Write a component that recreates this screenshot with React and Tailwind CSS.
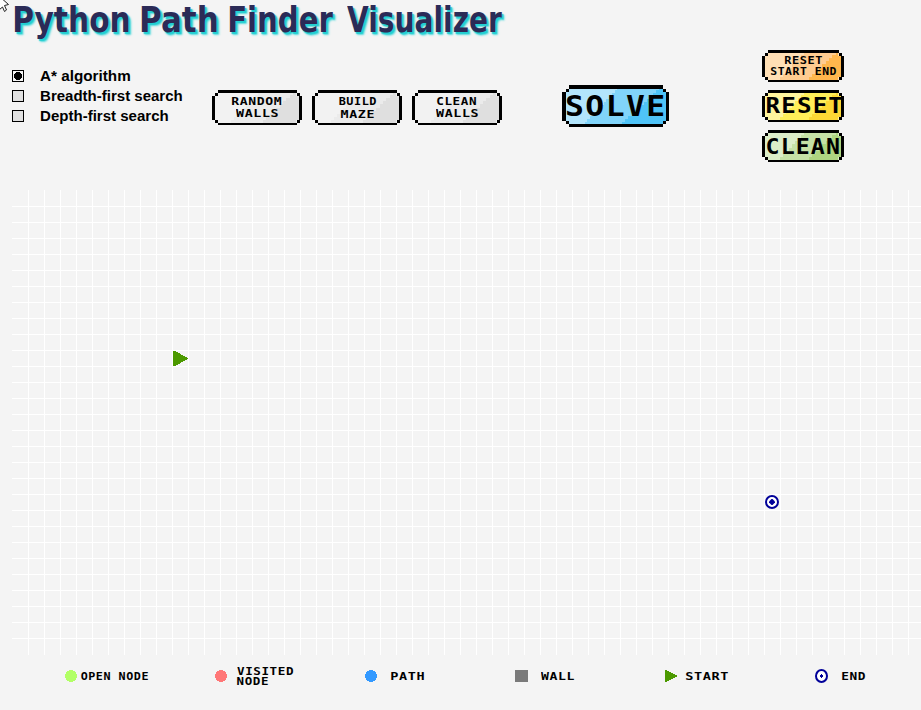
import { useLayoutEffect, useRef, useState } from "react";

// Stretches a piece of text so its capitals fill the box given by the class names.
function FitText({ children, className = "", font = "font-['DejaVu_Sans_Mono',monospace] tracking-[1.5px]" }) {
  const box = useRef(null);
  const label = useRef(null);
  const [transform, setTransform] = useState("none");

  useLayoutEffect(() => {
    const style = getComputedStyle(label.current);
    const rect = box.current.getBoundingClientRect();
    const line = parseFloat(style.lineHeight);
    const tracking = parseFloat(style.letterSpacing) || 0;
    const ctx = document.createElement("canvas").getContext("2d");
    ctx.font = `${style.fontWeight} ${style.fontSize} ${style.fontFamily}`;
    const ink = ctx.measureText(children);
    const cap = ctx.measureText("H").actualBoundingBoxAscent;
    const inkWidth =
      ink.actualBoundingBoxRight + ink.actualBoundingBoxLeft + tracking * (children.length - 1);
    const sx = rect.width / inkWidth;
    const sy = rect.height / cap;
    const baseline = (line + ink.fontBoundingBoxAscent - ink.fontBoundingBoxDescent) / 2;
    setTransform(
      `translate(${ink.actualBoundingBoxLeft * sx}px, ${-(baseline - cap) * sy}px) scale(${sx}, ${sy})`
    );
  }, [children]);

  return (
    <div ref={box} className={`shrink-0 ${className}`}>
      <span
        ref={label}
        className={`block w-max origin-top-left text-[32px] leading-[24px] font-bold whitespace-pre ${font}`}
        style={{ transform }}
      >
        {children}
      </span>
    </div>
  );
}

const TONES = {
  gray: ["#f2f2f2", "#ebebeb", "#dfdfdf"],
  blue: ["#b3e5fc", "#81d4fa", "#4fc3f7"],
  orange: ["#ffdfb5", "#ffcc90", "#ffb74d"],
  yellow: ["#fff59d", "#ffee58", "#fdd835"],
  green: ["#dcedc8", "#c5e1a5", "#aed581"],
};

// Region right of a stepped diagonal, ending at the inner side of the right border.
function steps(w, h, bottom, top) {
  const right = w - 3;
  const rows = Math.round((h - 4) / 3);
  const dy = (h - 4) / rows;
  let d = `M${w - 6} ${h - 2}`;
  for (let i = 0; i < rows; i++) {
    const x = Math.min(right, Math.round(w * (bottom + ((top - bottom) * (i + 0.5)) / rows)));
    d += `L${x} ${h - 2 - i * dy}L${x} ${h - 2 - (i + 1) * dy}`;
  }
  return d + `L${w - 6} 2L${w - 6} 6L${right} 6L${right} ${h - 5}L${w - 6} ${h - 5}Z`;
}

function PixelButton({ w, h, tone, unit = 3, className = "", children }) {
  const [light, mid, dark] = TONES[tone];
  const u = unit;
  const c = u + 3;
  const low = h - (u > 3 ? 3 : 2);
  const end = u > 3 ? w - 6 : w - 5;
  return (
    <button className={`relative block shrink-0 text-black ${className}`}>
      <svg width={w} height={h} className="absolute inset-0" shapeRendering="crispEdges">
        <path fill={light} d={`M${c} ${u}H${end}V${c}H${w - 3}V${low - 3}H${end}V${low}H${c}V${low - 3}H${u}V${c}H${c}Z`} />
        <path fill={mid} d={steps(w, h, 0.2, 0.53)} />
        <path fill={dark} d={steps(w, h, 0.55, 0.92)} />
        <path d={`M${c} 0H${end}V${u}H${c}Z`} />
        <path d={`M${c} ${low}H${end}V${h}H${c}Z`} />
        <path d={`M0 ${c}H${u}V${low - 3}H0Z`} />
        <path d={`M${w - 3} ${c}H${w}V${low - 3}H${w - 3}Z`} />
        <path d={`M${u} ${u}h3v3h-3z M${end} ${u}h3v3h-3z M${u} ${low - 3}h3v3h-3z M${end} ${low - 3}h3v3h-3z`} />
      </svg>
      <div className="relative flex h-full flex-col">{children}</div>
    </button>
  );
}

const SANS = "font-['Liberation_Sans',Arial,sans-serif]";
const TITLE = "font-['DejaVu_Sans',sans-serif] text-[#2b2b57] [text-shadow:2px_2px_1px_#22cfd2,3px_3px_2px_#5fdcde]";

function Radio({ checked, label, className }) {
  return (
    <label className="flex h-3 items-start">
      <svg width="12" height="12" className="mr-4 shrink-0" shapeRendering="crispEdges">
        <rect x="0.5" y="0.5" width="11" height="11" fill={checked ? "#f4f4f4" : "#e0e0e0"} stroke="#000" />
        {checked && <path d="M4 2h4v1h1v1h1v4h-1v1h-1v1h-4v-1h-1v-1h-1v-4h1v-1h1z" />}
      </svg>
      <FitText font={SANS} className={className}>{label}</FitText>
    </label>
  );
}

const TARGET = "#000099";

function Board() {
  return (
    <svg width="909" height="465" className="ml-3 block" shapeRendering="crispEdges">
      {Array.from({ length: 56 }, (_, i) => (
        <rect key={`v${i}`} x={16 * (i + 1)} y="0" width="1" height="465" fill="#fff" />
      ))}
      {Array.from({ length: 28 }, (_, i) => (
        <rect key={`h${i}`} x="0" y={16 * (i + 1)} width="909" height="1" fill="#fff" />
      ))}
      <path d="M161 161h2l13 7v1l-13 7h-2z" fill="#4c9900" />
      <g shapeRendering="auto">
        <circle cx="760" cy="312" r="6" fill="#fff" stroke={TARGET} strokeWidth="2" />
        <path d="M759.5 309h1l2.5 2.5v1l-2.5 2.5h-1l-2.5-2.5v-1z" fill={TARGET} />
      </g>
    </svg>
  );
}

function Dot({ color }) {
  return (
    <svg width="12" height="12" className="shrink-0" shapeRendering="crispEdges">
      <path d="M4 0h4v1h2v1h1v2h1v4h-1v2h-1v1h-2v1h-4v-1h-2v-1h-1v-2h-1v-4h1v-2h1v-1h2z" fill={color} />
    </svg>
  );
}

function Legend() {
  return (
    <footer className="flex h-[42px] items-center pl-[65px]">
      <div className="flex w-[150px] items-center gap-[4px]">
        <Dot color="#b2ff66" />
        <FitText className="h-2 w-[67px]">OPEN NODE</FitText>
      </div>
      <div className="flex w-[150px] items-center gap-[10px]">
        <Dot color="#ff7777" />
        <div className="flex flex-col gap-[2px]">
          <FitText className="h-2 w-[56px]">VISITED</FitText>
          <FitText className="h-2 w-[31px]">NODE</FitText>
        </div>
      </div>
      <div className="flex w-[150px] items-center gap-[14px]">
        <Dot color="#3399ff" />
        <FitText className="h-2 w-[33px]">PATH</FitText>
      </div>
      <div className="flex w-[150px] items-center gap-[13px]">
        <div className="h-3 w-[13px] bg-[#7a7a7a]" />
        <FitText className="h-2 w-[33px]">WALL</FitText>
      </div>
      <div className="flex w-[150px] items-center gap-[9px]">
        <svg width="12" height="12" shapeRendering="crispEdges">
          <path d="M0 0h1l11 5.5v1l-11 5.5h-1z" fill="#4c9900" />
        </svg>
        <FitText className="h-2 w-[42px]">START</FitText>
      </div>
      <div className="flex items-center gap-[14px]">
        <svg width="13" height="14">
          <ellipse cx="6.5" cy="7" rx="5.5" ry="6" fill="#fff" stroke={TARGET} strokeWidth="2" />
          <path d="M6 5h1v1h1v2h-1v1h-1v-1h-1v-2h1z" fill={TARGET} shapeRendering="crispEdges" />
        </svg>
        <FitText className="h-2 w-[23px]">END</FitText>
      </div>
    </footer>
  );
}

export default function App() {
  return (
    <main className="relative h-[710px] w-[921px] overflow-hidden bg-[#f4f4f4] text-black">
      <svg width="10" height="14" className="absolute top-0 left-0">
        <path d="M-1 -4L8.5 4.5L4.5 5.5L6.5 10L4.5 11.5L2.5 7L-1 10" fill="#fff" stroke="#222" strokeWidth="1" />
      </svg>
      <header className="flex h-[190px] flex-col pt-[7px]">
        <h1 className="flex pl-[14px]">
          <FitText font={TITLE} className="mr-3 h-[25px] w-[115px]">Python</FitText>
          <FitText font={TITLE} className="mr-3 h-[25px] w-[76px]">Path</FitText>
          <FitText font={TITLE} className="mr-[14px] h-[25px] w-[104px]">Finder</FitText>
          <FitText font={TITLE} className="h-[25px] w-[155px]">Visualizer</FitText>
        </h1>
        <div className="mt-[18px] flex items-start pl-3">
          <div className="flex w-[200px] flex-col gap-2 pt-5">
            <Radio checked label="A* algorithm" className="mt-px h-[10px] w-[90px]" />
            <Radio label="Breadth-first search" className="mt-px ml-px h-[10px] w-[141px]" />
            <Radio label="Depth-first search" className="mt-px ml-px h-[10px] w-[127px]" />
          </div>
          <div className="flex gap-[10px] pt-10">
            <PixelButton w={90} h={35} tone="gray" className="h-[35px] w-[90px]">
              <FitText className="mt-[7px] ml-5 h-2 w-[49px]">RANDOM</FitText>
              <FitText className="mt-[4px] ml-6 h-2 w-[42px]">WALLS</FitText>
            </PixelButton>
            <PixelButton w={90} h={35} tone="gray" className="h-[35px] w-[90px]">
              <FitText className="mt-[7px] ml-[27px] h-2 w-[37px]">BUILD</FitText>
              <FitText className="mt-[5px] ml-[29px] h-2 w-[33px]">MAZE</FitText>
            </PixelButton>
            <PixelButton w={90} h={35} tone="gray" className="h-[35px] w-[90px]">
              <FitText className="mt-[7px] ml-[25px] h-2 w-[39px]">CLEAN</FitText>
              <FitText className="mt-[4px] ml-6 h-2 w-[42px]">WALLS</FitText>
            </PixelButton>
          </div>
          <PixelButton w={107} h={42} unit={4} tone="blue" className="mt-[35px] ml-[60px] h-[42px] w-[107px]">
            <FitText className="mt-[11px] ml-[5px] h-5 w-[97px]">SOLVE</FitText>
          </PixelButton>
          <div className="ml-[93px] flex flex-col gap-2">
            <PixelButton w={82} h={32} tone="orange" className="h-8 w-[82px]">
              <FitText className="mt-[7px] ml-[23px] h-[7px] w-[37px]">RESET</FitText>
              <FitText className="mt-[3px] ml-[9px] h-2 w-[65px]">START END</FitText>
            </PixelButton>
            <PixelButton w={82} h={32} tone="yellow" className="h-8 w-[82px]">
              <FitText className="mt-2 ml-[5px] h-[15px] w-[75px]">RESET</FitText>
            </PixelButton>
            <PixelButton w={82} h={32} tone="green" className="h-8 w-[82px]">
              <FitText className="mt-[9px] ml-[5px] h-[15px] w-[72px]">CLEAN</FitText>
            </PixelButton>
          </div>
        </div>
      </header>
      <Board />
      <Legend />
    </main>
  );
}
